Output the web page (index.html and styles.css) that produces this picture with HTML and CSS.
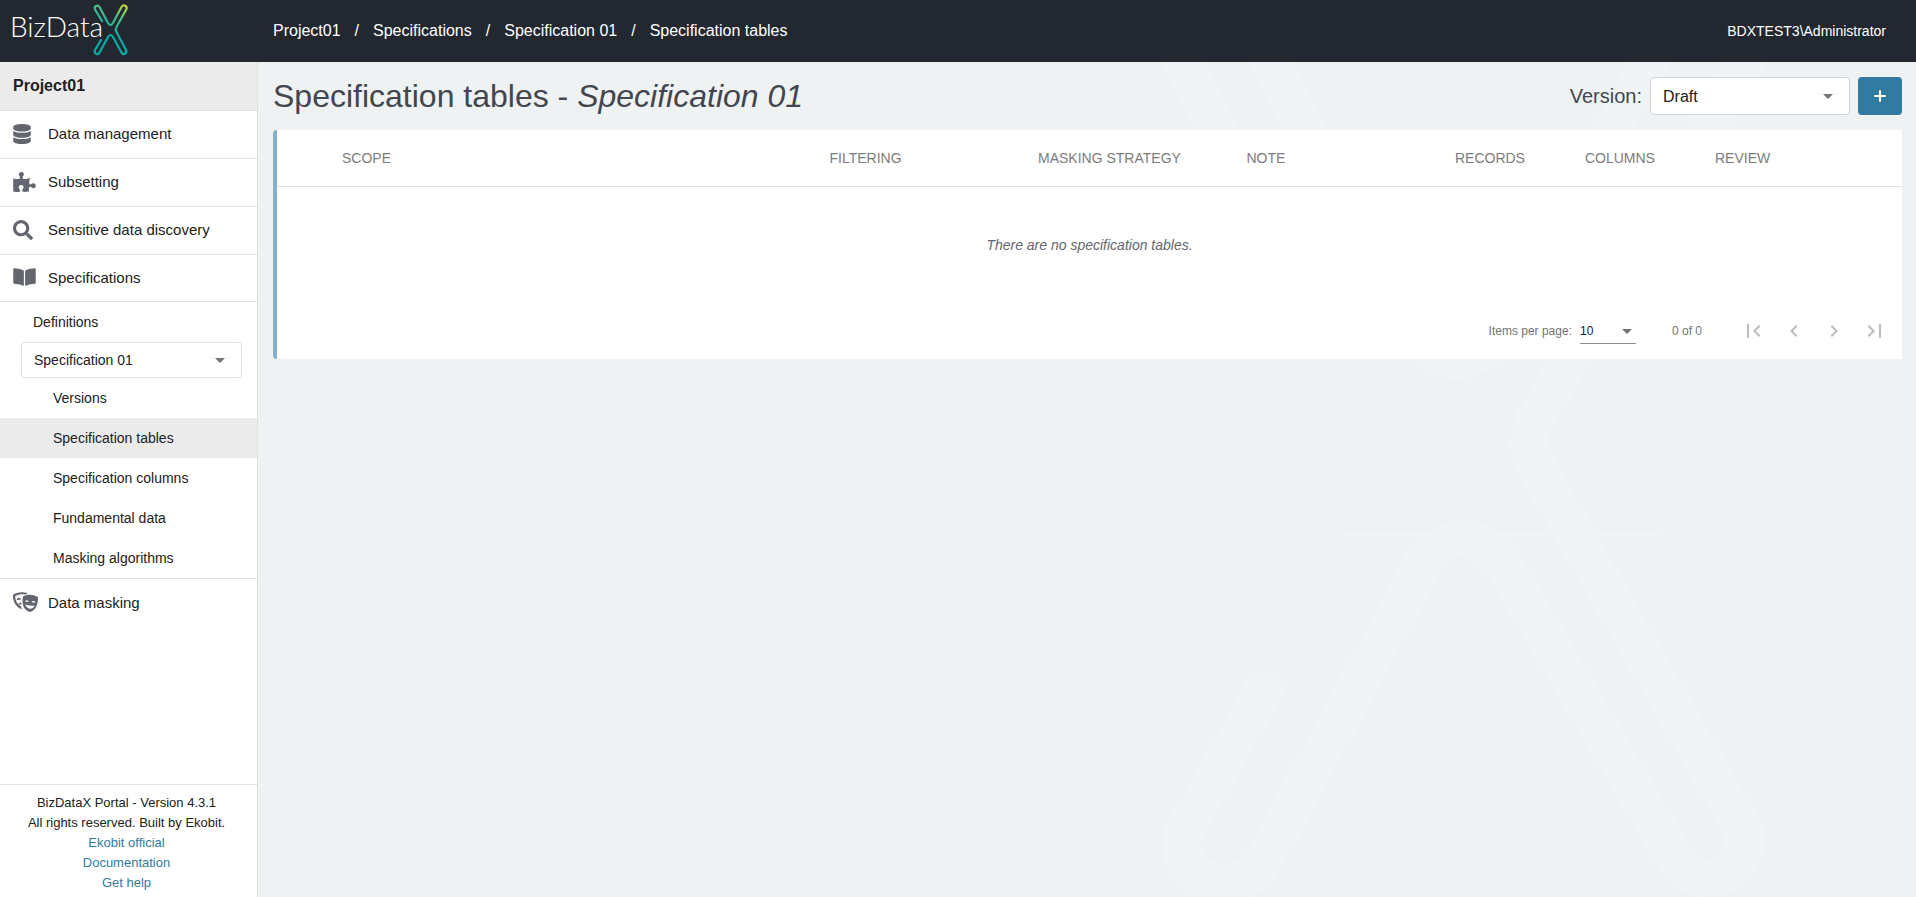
FILE: index.html
```html
<!DOCTYPE html>
<html lang="en">
<head>
<meta charset="utf-8">
<title>BizDataX Portal</title>
<link rel="stylesheet" href="styles.css">
</head>
<body>
<div class="app">
  <header class="topbar">
    <a class="logo" href="#" aria-label="BizDataX">
      <svg width="118" height="62" viewBox="0 0 118 62">
        <defs>
          <linearGradient id="x-fill" gradientUnits="userSpaceOnUse" x1="114" y1="4" x2="98" y2="34">
            <stop offset="0" stop-color="#d3dc2b"/>
            <stop offset="0.45" stop-color="#4dbd88"/>
            <stop offset="1" stop-color="#04ada6"/>
          </linearGradient>
        </defs>
        <text class="logo-text" x="-2" y="37">BizData</text>
        <path fill="none" stroke="url(#x-fill)" stroke-width="2.200" stroke-linecap="round" d="M90 21L83 9.500C81.500 6.500 86 4 87.500 7L96 23Q98.500 27 101 23L109.500 7C111.500 4 115.500 6 114.500 9L104.500 27Q103 29.500 104.500 32L114 50C115.500 53.500 111 55.500 109.500 52.500L101 37Q98.500 33 96 37L87.500 52.500C86 55.500 81.500 53.500 83 50L89 40"/>
      </svg>
    </a>
    <nav class="crumbs" aria-label="Breadcrumb">
      <a href="#">Project01</a><span>/</span><a href="#">Specifications</a><span>/</span><a href="#">Specification 01</a><span>/</span><a href="#">Specification tables</a>
    </nav>
    <div class="user">BDXTEST3\Administrator</div>
  </header>

  <aside class="sidebar">
    <div class="project">Project01</div>
    <nav class="menu">
      <a class="item" href="#"><span class="icon"><svg width="18" height="20" viewBox="0 0 448 512"><path d="M448 73.143v45.714C448 159.143 347.667 192 224 192S0 159.143 0 118.857V73.143C0 32.857 100.333 0 224 0s224 32.857 224 73.143zM448 176v102.857C448 319.143 347.667 352 224 352S0 319.143 0 278.857V176c48.125 33.143 136.208 48.572 224 48.572S399.874 209.143 448 176zm0 160v102.857C448 479.143 347.667 512 224 512S0 479.143 0 438.857V336c48.125 33.143 136.208 48.572 224 48.572S399.874 369.143 448 336z"/></svg></span>Data management</a>
      <a class="item" href="#"><span class="icon"><svg width="23" height="20" viewBox="0 0 576 512"><path d="M519.442 288.651c-41.519 0-59.5 31.593-82.058 31.593C377.409 320.244 432 144 432 144s-196.288 80-196.288-3.297c0-35.827 36.288-46.25 36.288-85.985C272 19.216 243.885 0 210.539 0c-34.654 0-66.366 18.891-66.366 56.346 0 41.364 31.711 59.277 31.711 81.75C175.885 207.719 0 166.758 0 166.758v333.237s178.635 41.047 178.635-28.662c0-22.473-40-40.107-40-81.471 0-37.456 29.25-56.346 63.577-56.346 33.673 0 61.788 19.216 61.788 54.717 0 39.735-36.288 50.158-36.288 85.985 0 60.803 129.675 25.73 181.23 25.73 0 0-34.725-120.101 25.827-120.101 35.962 0 46.423 36.152 86.308 36.152C556.712 416 576 387.99 576 354.443c0-34.199-18.962-65.792-56.558-65.792z"/></svg></span>Subsetting</a>
      <a class="item" href="#"><span class="icon"><svg width="20" height="20" viewBox="0 0 512 512"><path d="M505 442.7L405.3 343c-4.5-4.5-10.6-7-17-7H372c27.6-35.3 44-79.7 44-128C416 93.1 322.9 0 208 0S0 93.1 0 208s93.1 208 208 208c48.3 0 92.7-16.4 128-44v16.3c0 6.4 2.5 12.5 7 17l99.7 99.7c9.4 9.4 24.6 9.4 33.9 0l28.3-28.3c9.4-9.4 9.4-24.6.1-34zM208 336c-70.7 0-128-57.2-128-128 0-70.7 57.2-128 128-128 70.7 0 128 57.2 128 128 0 70.7-57.2 128-128 128z"/></svg></span>Sensitive data discovery</a>
      <a class="item open" href="#"><span class="icon"><svg width="23" height="20" viewBox="0 0 576 512"><path d="M542.22 32.05c-54.8 3.11-163.72 14.43-230.96 55.59-4.64 2.84-7.27 7.89-7.27 13.17v363.87c0 11.55 12.63 18.85 23.28 13.49 69.18-34.82 169.23-44.32 218.7-46.92 16.89-.89 30.02-14.43 30.02-30.66V62.75c.01-17.71-15.35-31.74-33.77-30.7zM264.73 87.64C197.5 46.48 88.58 35.17 33.78 32.05 15.36 31.01 0 45.04 0 62.75V400.6c0 16.24 13.13 29.78 30.02 30.66 49.49 2.6 149.59 12.11 218.77 46.95 10.62 5.35 23.21-1.94 23.21-13.46V100.63c0-5.29-2.62-10.14-7.27-12.99z"/></svg></span>Specifications</a>
      <div class="submenu">
        <a class="sub definitions" href="#">Definitions</a>
        <div class="select spec-select">
          <select aria-label="Specification"><option>Specification 01</option></select>
        </div>
        <a class="sub" href="#">Versions</a>
        <a class="sub active" href="#">Specification tables</a>
        <a class="sub" href="#">Specification columns</a>
        <a class="sub" href="#">Fundamental data</a>
        <a class="sub" href="#">Masking algorithms</a>
      </div>
      <a class="item last" href="#"><span class="icon"><svg width="25" height="20" viewBox="0 0 25 20"><path d="M0 2.800C3.500.2 9.500 -.6 14.600 1.200L13.400 2.600C9.500 1.700 5.500 2.300 2.200 4 2.200 8.500 4 12 7.800 14.200L9 17.300C2.500 15.500 -.5 8.500 0 2.800z"/><path d="M3.800 7.200Q5.200 5.200 7.600 6.200L7.200 8Q5.500 7.200 3.800 8.400zM5.300 12.300Q6.300 10.300 8.200 10.600L8.400 13Q6.800 12 5.300 12.300z"/><path fill-rule="evenodd" d="M10.200 4.200C15 1.800 20 2.300 24.800 5 25.700 10 23.500 18 17.500 20 10.500 19 8 11 10.200 4.200zM12 9.200Q13.800 7.300 16 9.600 13.800 10 12 9.200zM18.300 9.900Q21 8 22.600 10.200 20.500 10.900 18.300 9.900zM12.300 12.600Q16.500 14.300 21.800 13.500 20 16.800 17 16.700 13.800 16.300 12.300 12.600z"/></svg></span>Data masking</a>
    </nav>
    <footer class="about">
      <div>BizDataX Portal - Version 4.3.1</div>
      <div>All rights reserved. Built by Ekobit.</div>
      <a href="#">Ekobit official</a>
      <a href="#">Documentation</a>
      <a href="#">Get help</a>
    </footer>
  </aside>

  <main class="content">
    <svg class="watermark" width="600" height="835" viewBox="0 0 600 835" aria-hidden="true">
      <path d="M-68 -60L42 165M-5 -100L190 270Q240 326 280 270L482 -100M526 -6L313 358Q301 380 313 402L519 764C540 800 480 850 446 784L280 500Q240 452 202 500L46 790C20 850 -60 810 -36 766L42 628"/>
      <path class="thin" d="M119 472H438"/>
    </svg>
    <div class="heading">
      <h1>Specification tables - <em>Specification 01</em></h1>
      <div class="tools">
        <label for="version">Version:</label>
        <div class="select version-select">
          <select id="version"><option>Draft</option></select>
        </div>
        <button class="add" type="button" aria-label="Add"><svg width="12" height="12" viewBox="0 0 12 12"><path d="M6 1V11M1 6H11" stroke="#fff" stroke-width="2" stroke-linecap="round"/></svg></button>
      </div>
    </div>

    <section class="card">
      <table class="grid">
        <colgroup><col class="c-mark"><col class="c-scope"><col class="c-mid"><col class="c-mid"><col class="c-mid"><col class="c-num"><col class="c-num"><col></colgroup>
        <thead>
          <tr><th></th><th>SCOPE</th><th>FILTERING</th><th>MASKING STRATEGY</th><th>NOTE</th><th>RECORDS</th><th>COLUMNS</th><th>REVIEW</th></tr>
        </thead>
        <tbody>
          <tr><td colspan="8">There are no specification tables.</td></tr>
        </tbody>
      </table>
      <div class="pager">
        <label for="page-size">Items per page:</label>
        <div class="select size-select">
          <select id="page-size"><option>10</option></select>
        </div>
        <span class="range">0 of 0</span>
        <div class="pages">
          <button type="button" disabled aria-label="First page"><svg width="24" height="24" viewBox="0 0 24 24"><path d="M18.410 16.590L13.820 12l4.590-4.590L17 6l-6 6 6 6zM5 5h2v14H5z"/></svg></button>
          <button type="button" disabled aria-label="Previous page"><svg width="24" height="24" viewBox="0 0 24 24"><path d="M15.410 7.410L14 6l-6 6 6 6 1.410-1.410L10.830 12z"/></svg></button>
          <button type="button" disabled aria-label="Next page"><svg width="24" height="24" viewBox="0 0 24 24"><path d="M10 6L8.590 7.410 13.170 12l-4.580 4.590L10 18l6-6z"/></svg></button>
          <button type="button" disabled aria-label="Last page"><svg width="24" height="24" viewBox="0 0 24 24"><path d="M5.590 7.410L10.180 12l-4.590 4.590L7 18l6-6-6-6zM17 5h2v14h-2z"/></svg></button>
        </div>
      </div>
    </section>
  </main>
</div>
</body>
</html>
```

FILE: styles.css
```css
* { box-sizing: border-box; }

body {
  margin: 0;
  font-family: "Liberation Sans", Arial, sans-serif;
  font-size: 14px;
  color: #212121;
  background: #eef2f3;
}

a { color: inherit; text-decoration: none; }
svg { flex: none; }

select, button { font: inherit; color: inherit; }

.app {
  display: grid;
  grid-template: 62px 1fr / 258px minmax(0, 1fr);
  min-height: 100vh;
}

/* top bar */
.topbar {
  grid-column: 1 / -1;
  display: flex;
  align-items: center;
  background: #23272f;
  color: #fff;
  padding: 0 30px 0 12px;
}

.logo { width: 261px; }
.logo svg { display: block; overflow: visible; }
.logo-text { font-family: Lato, sans-serif; font-weight: 300; font-size: 28px; fill: #fff; }

.crumbs { display: flex; gap: 14px; flex: 1; font-size: 16px; }
.user { font-size: 14px; }

/* sidebar */
.sidebar {
  display: flex;
  flex-direction: column;
  background: #fff;
  border-right: 1px solid #e0e0e0;
}

.project {
  height: 49px;
  padding: 0 13px;
  line-height: 47px;
  font-size: 16px;
  font-weight: bold;
  background: #ebebeb;
  border-bottom: 1px solid #e0e0e0;
}

.menu { flex: 1; }

.item {
  display: flex;
  align-items: center;
  height: 48px;
  padding: 0 0 2px 13px;
  font-size: 15px;
  border-bottom: 1px solid #e0e0e0;
}
.item.open { height: 47px; }
.item.last { border-bottom: 0; }
.icon { display: flex; width: 35px; fill: #63666e; }

.submenu { border-bottom: 1px solid #e0e0e0; }
.sub {
  display: block;
  padding-left: 53px;
  line-height: 40px;
}
.sub.definitions { padding-left: 33px; }
.sub.active { background: #ebebeb; }

.about {
  display: flex;
  flex-direction: column;
  align-items: center;
  padding: 8px 4px 4px 0;
  border-top: 1px solid #e0e0e0;
  font-size: 13px;
  line-height: 20px;
}
.about a { color: #317ba1; }

/* drop-downs */
.select { position: relative; }
.select select {
  display: block;
  width: 100%;
  height: 100%;
  padding: 0 12px;
  appearance: none;
  background: #fff;
  border: 1px solid #e0e0e0;
  border-radius: 4px;
}
.select::after {
  content: "";
  position: absolute;
  top: calc(50% - 2px);
  right: 17px;
  border: 5px solid transparent;
  border-top-color: #757575;
  border-bottom-width: 0;
  pointer-events: none;
}
.spec-select { height: 36px; margin: 0 15px 0 21px; }

/* content */
.content {
  position: relative;
  overflow: hidden;
  padding: 15px 14px 15px 15px;
}
.watermark {
  position: absolute;
  top: 0;
  right: 94px;
  overflow: visible;
  fill: none;
  stroke: #f1f4f6;
  stroke-width: 38px;
  stroke-linecap: round;
}
.watermark .thin { stroke-width: 3px; }

.heading, .card { position: relative; }
.heading {
  display: flex;
  justify-content: space-between;
  align-items: center;
  height: 38px;
  margin-bottom: 15px;
  color: #43464d;
}
h1 { margin: 0; font-size: 32px; font-weight: normal; }

.tools { display: flex; align-items: center; height: 38px; font-size: 20px; }
.version-select { width: 200px; height: 38px; margin: 0 8px; }
.version-select select { color: #212121; font-size: 16px; border-color: #ced4da; }
.add {
  display: grid;
  place-items: center;
  width: 44px;
  height: 38px;
  padding: 0;
  background: #317ba1;
  border: 0;
  border-radius: 4px;
}

.card {
  background: #fff;
  border-left: 4px solid #86b1c9;
  border-radius: 4px 0 0 4px;
}

.grid { width: 100%; table-layout: fixed; border-collapse: collapse; }
.c-mark { width: 4%; }
.c-scope { width: 30%; }
.c-mid { width: 12.83%; }
.c-num { width: 8%; }
.grid th {
  height: 56px;
  padding: 0;
  font-weight: normal;
  text-align: left;
  color: #7c7c7c;
  border-bottom: 1px solid #e0e0e0;
}
.grid td {
  height: 117px;
  padding: 0;
  text-align: center;
  font-style: italic;
  color: #63666e;
}

.pager {
  display: flex;
  justify-content: flex-end;
  align-items: center;
  height: 56px;
  padding-right: 8px;
  font-size: 12px;
  color: #757575;
}
.size-select { width: 56px; height: 26px; margin: 0 36px 0 8px; }
.size-select select {
  padding: 0;
  color: #212121;
  border: 0;
  border-bottom: 1px solid #8c8c8c;
  border-radius: 0;
}
.size-select::after { right: 4px; }
.pages { display: flex; margin-left: 32px; }
.pages button {
  display: grid;
  place-items: center;
  width: 40px;
  height: 40px;
  padding: 0;
  background: none;
  border: 0;
}
.pages svg { fill: #bdbdbd; }
```
